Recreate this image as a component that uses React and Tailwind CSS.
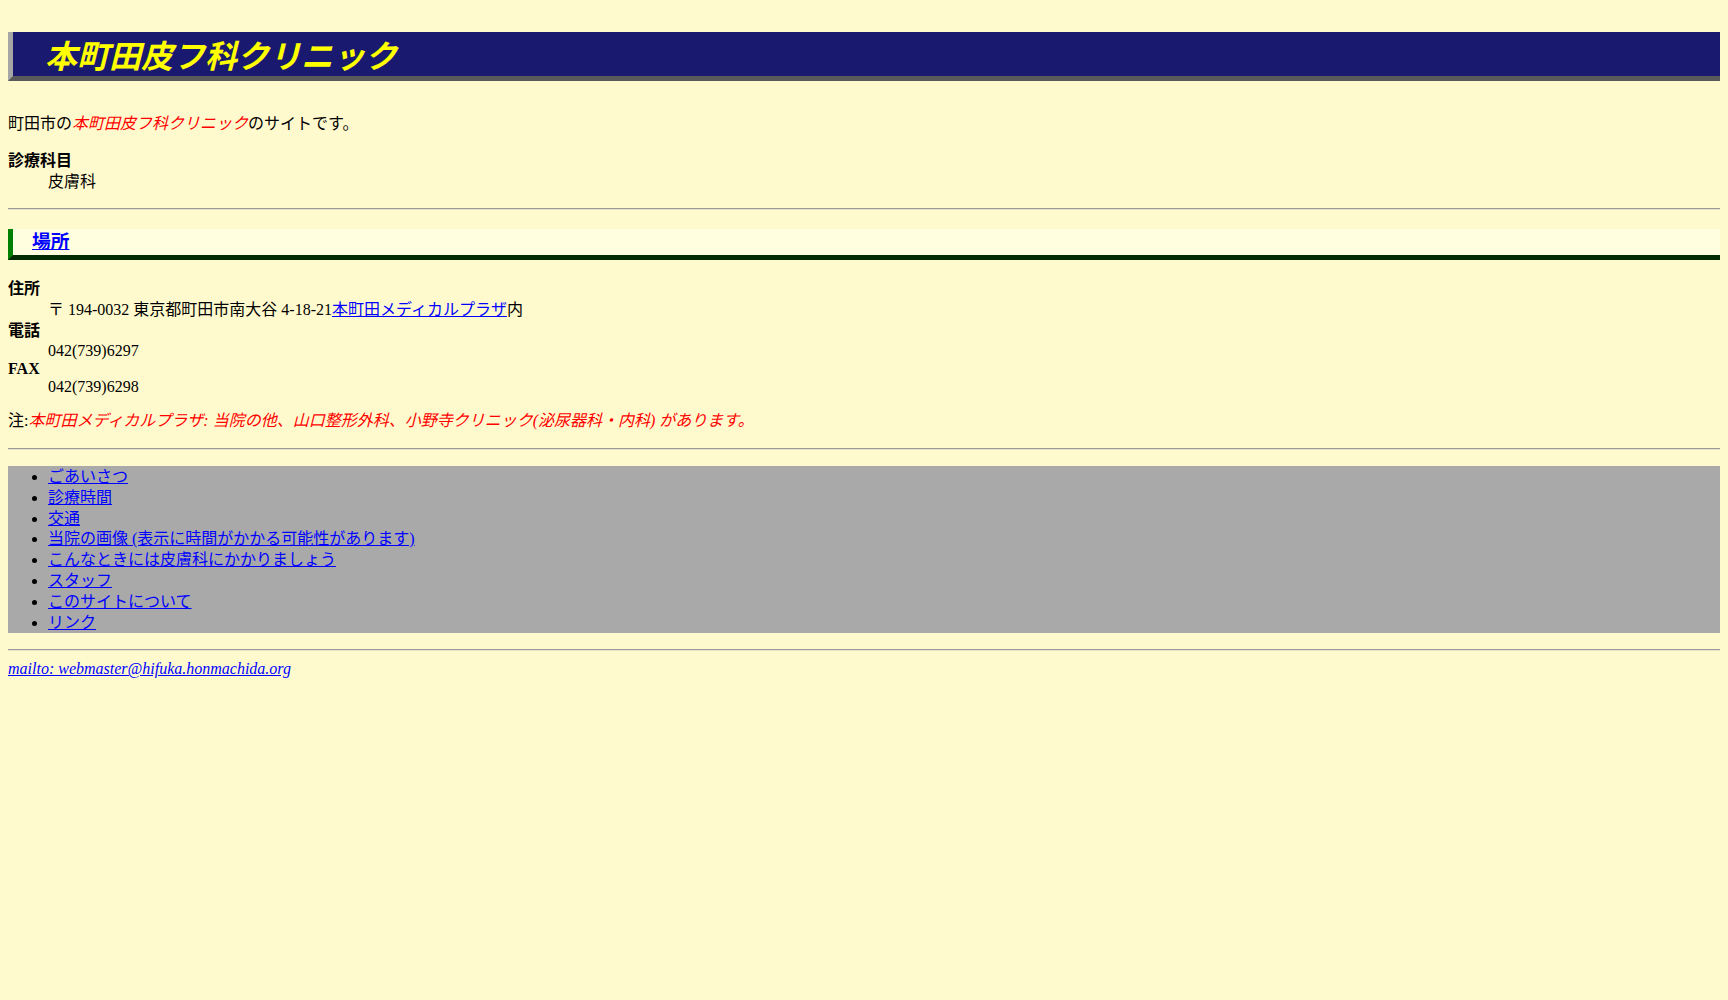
export default function App() {
  const font = "font-['Liberation_Serif','Noto_Sans_CJK_JP',serif]";
  const Hr = () => (
    <div className="h-[2px] border-t border-t-[#9a9a9a] border-b border-b-[#e6e2c2]" />
  );
  const links = [
    "ごあいさつ",
    "診療時間",
    "交通",
    "当院の画像 (表示に時間がかかる可能性があります)",
    "こんなときには皮膚科にかかりましょう",
    "スタッフ",
    "このサイトについて",
    "リンク",
  ];
  return (
    <div className={`min-h-[1000px] bg-[#fffacd] px-[8px] pt-[32px] text-[16px] text-black ${font}`}>
      <div className="box-border flex h-[49px] items-center border-l-[5px] border-b-[5px] border-l-[#a6a6a6] border-b-[#595959] bg-[#191970] pl-[32px]">
        <h1 className="-mt-[1px] text-[32px] font-bold italic leading-none text-[#ffff00] font-['Noto_Sans_CJK_JP',sans-serif]">
          本町田皮フ科クリニック
        </h1>
      </div>

      <p className="mt-[33px] leading-[20px]">
        町田市の<em className="text-[#ff0000]">本町田皮フ科クリニック</em>のサイトです。
      </p>

      <dl className="mt-[16px]">
        <dt className="font-bold leading-[21px]">診療科目</dt>
        <dd className="ml-[40px] leading-[21px]">皮膚科</dd>
      </dl>

      <div className="mt-[16px]">
        <Hr />
      </div>

      <div className="mt-[19px] box-border flex h-[31px] items-center border-l-[5px] border-b-[5px] border-l-[#008000] border-b-[#002a00] bg-[#ffffe0] pl-[19px]">
        <h3 className="text-[18.72px] font-bold leading-none">
          <a href="#" className="text-[#0000ff] underline">場所</a>
        </h3>
      </div>

      <dl className="mt-[18px]">
        <dt className="font-bold leading-[21px]">住所</dt>
        <dd className="ml-[40px] leading-[21px]">
          〒 194-0032 東京都町田市南大谷 4-18-21<a href="#" className="text-[#0000ff] underline">本町田メディカルプラザ</a>内
        </dd>
        <dt className="font-bold leading-[21px]">電話</dt>
        <dd className="ml-[40px] leading-[19px]">042(739)6297</dd>
        <dt className="font-bold leading-[17px]">FAX</dt>
        <dd className="ml-[40px] leading-[19px]">042(739)6298</dd>
      </dl>

      <p className="mt-[15px] leading-[20px]">
        注:<em className="text-[#ff0000]">本町田メディカルプラザ: 当院の他、山口整形外科、小野寺クリニック(泌尿器科・内科) があります。</em>
      </p>

      <div className="mt-[17px]">
        <Hr />
      </div>

      <div className="mt-[16px] bg-[#a9a9a9]">
        <ul className="list-disc pl-[40px] pt-[1px]">
          {links.map((t) => (
            <li key={t} className="leading-[20.8px]">
              <a href="#" className="text-[#0000ff] underline">{t}</a>
            </li>
          ))}
        </ul>
      </div>

      <div className="mt-[16px]">
        <Hr />
      </div>

      <address className="mt-[8px] italic leading-[20px]">
        <a href="#" className="text-[#0000ff] underline">mailto: webmaster@hifuka.honmachida.org</a>
      </address>
    </div>
  );
}
